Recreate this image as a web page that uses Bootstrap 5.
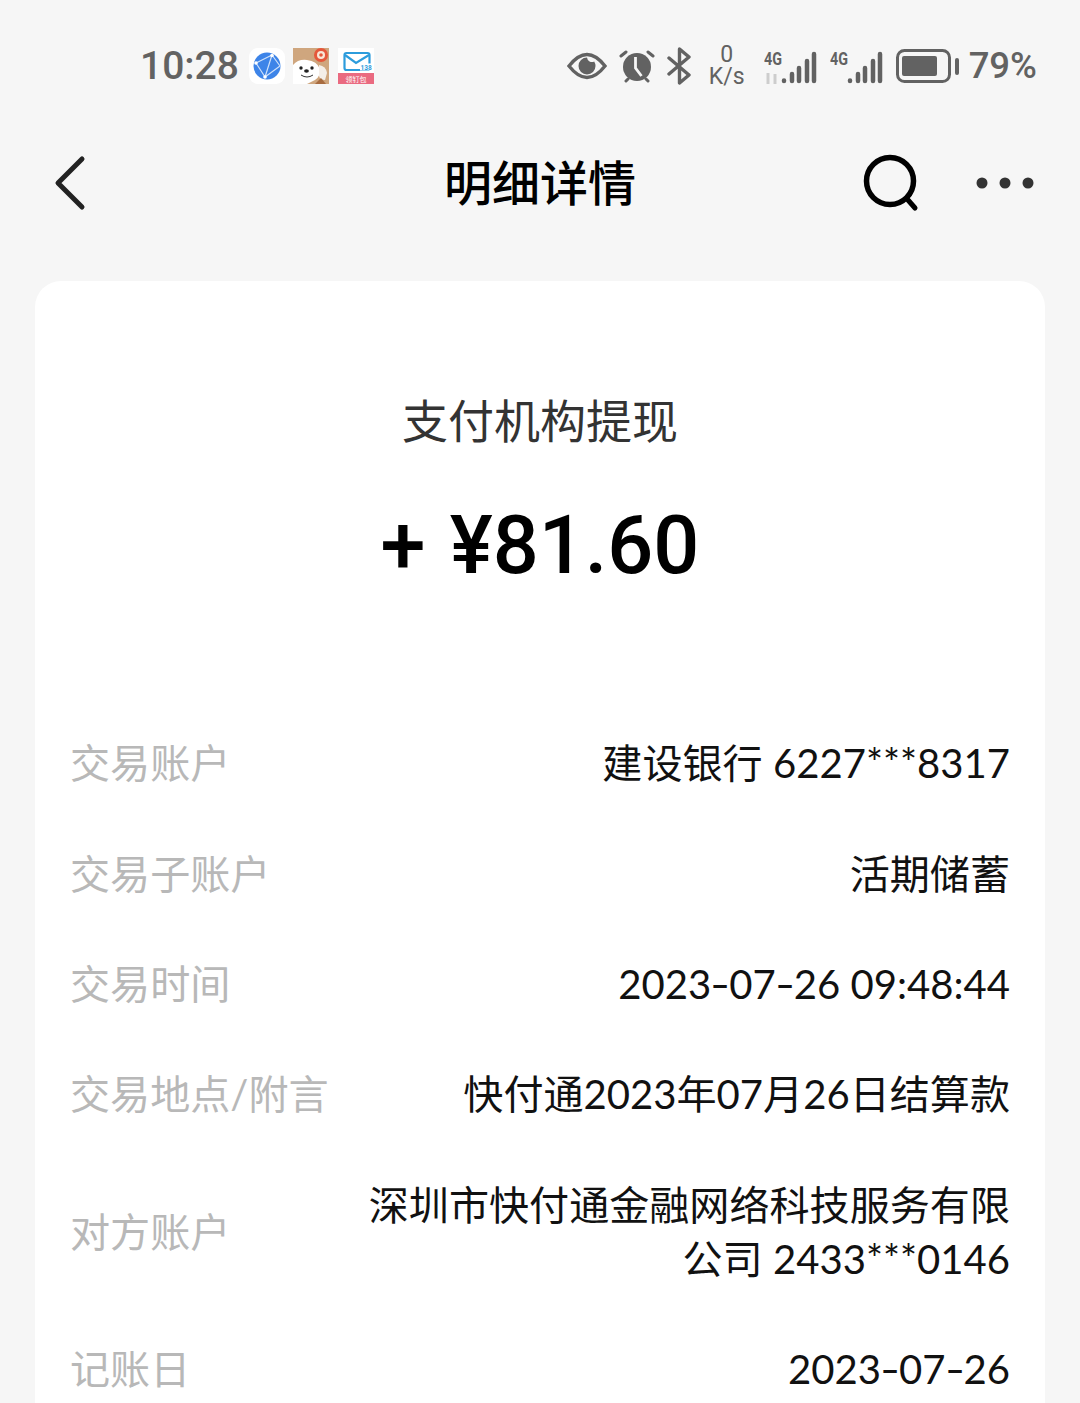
<!DOCTYPE html>
<html lang="zh-CN">
<head>
  <meta charset="UTF-8">
  <title>明细详情</title>
  <meta name="viewport" content="width=device-width, initial-scale=1">
  <link href="https://cdn.jsdelivr.net/npm/bootstrap@5.3.0/dist/css/bootstrap.min.css" rel="stylesheet">
  <style>
    html, body {
      height: 1403px;
      overflow: hidden;
      background: #f6f6f6;
    }
    body {
      font-family: Roboto, "Noto Sans CJK SC", sans-serif;
    }
    .status-bar {
      height: 132px;
      padding: 0 43px 0 140px;
      color: #626262;
    }
    .status-time {
      font-size: 39px;
      line-height: 1;
      font-weight: 500;
      margin-right: 10px;
    }
    .status-app {
      display: block;
      width: 36px;
      height: 36px;
      margin-right: 8.5px;
    }
    .status-icons {
      margin-left: auto;
    }
    .gap-b { margin-right: 10px; }
    .gap-s { margin-right: 12px; }
    .gap-m { margin-right: 17px; }
    .gap-l { margin-right: 18px; }
    .status-speed {
      font-size: 23px;
      line-height: 22px;
      width: 38px;
      text-align: center;
    }
    .status-pct {
      font-size: 36.5px;
      line-height: 1;
      font-weight: 500;
    }
    .top-bar {
      height: 102px;
      padding: 0 45px 0 52px;
    }
    .top-title {
      left: 0;
      right: 0;
      top: 2px;
      font-size: 48px;
      line-height: 102px;
      font-weight: 500;
      color: #000;
      text-align: center;
    }
    .top-search {
      margin-right: 55px;
    }
    .detail-card {
      margin: 47px 35px 0;
      height: 1200px;
      padding: 114px 35px 0;
      background: #fff;
      border-radius: 26px;
    }
    .detail-type {
      font-size: 46px;
      line-height: 54px;
      color: #333;
      text-align: center;
    }
    .detail-amount {
      margin-top: 51px;
      font-size: 81px;
      line-height: 92px;
      font-weight: 500;
      word-spacing: 4px;
      color: #000;
      text-align: center;
    }
    .detail-rows {
      margin-top: 116px;
      font-family: Lato, "Noto Sans CJK SC", sans-serif;
      font-size: 40.1px;
      line-height: 54px;
    }
    .detail-row {
      padding: 28.2px 0;
    }
    .detail-key {
      color: #b8b8b8;
      white-space: nowrap;
    }
    .detail-val {
      color: #111;
      text-align: right;
      max-width: 650px;
    }
    .wide-dash {
      display: inline-block;
      width: 18px;
      text-align: center;
      transform: scaleX(1.35);
    }
  </style>
</head>
<body>
  <!-- status bar -->
  <div class="status-bar d-flex align-items-center">
    <span class="status-time">10:28</span>
    <svg class="status-app" viewBox="0 0 36 36">
      <rect width="36" height="36" rx="9" fill="#fff"/>
      <circle cx="18" cy="18" r="13.5" fill="#3d84e8"/>
      <path d="M7 15 23 7M7 15l9 14M23 7l-7 22M23 7l8 11M16 29l15-11" stroke="#cfe1fa" stroke-width="1.2" fill="none"/>
      <circle cx="23" cy="7.500" r="1.800" fill="#fff"/>
      <circle cx="7" cy="15" r="1.800" fill="#fff"/>
      <circle cx="16" cy="29" r="1.800" fill="#fff"/>
    </svg>
    <svg class="status-app" viewBox="0 0 36 36">
      <rect width="36" height="36" fill="#cfa67e"/>
      <circle cx="28" cy="7" r="7" fill="#e5573a"/>
      <circle cx="28" cy="7" r="4" fill="#f8e6d6"/>
      <circle cx="28" cy="7" r="1.800" fill="#e5573a"/>
      <path d="M0 36V17Q5 11 14 12 24 13 27 21 28 28 22 32L14 36Z" fill="#fff"/>
      <path d="M26 17q7 1 8 8l-2 7q-5 0-6-4Z" fill="#f4eee8"/>
      <circle cx="8" cy="20" r="1.700" fill="#222"/>
      <circle cx="19" cy="20" r="1.700" fill="#222"/>
      <ellipse cx="13.500" cy="23" rx="2.400" ry="1.700" fill="#222"/>
      <path d="M8 27q6 4 12 0" fill="none" stroke="#333" stroke-width="1"/>
      <path d="M22 36l6-6 5 6Z" fill="#a86c40"/>
    </svg>
    <svg class="status-app" viewBox="0 0 36 36">
      <rect width="36" height="36" fill="#fff"/>
      <rect x="6.500" y="5" width="25" height="17" rx="2" fill="none" stroke="#2c9cdc" stroke-width="2.200"/>
      <path d="M7 7l11 8 13-8" fill="none" stroke="#2c9cdc" stroke-width="2.200"/>
      <rect x="22" y="15.500" width="11" height="7" fill="#fff"/>
      <text x="22.500" y="21.500" font-size="6.500" font-weight="700" fill="#2c9cdc" font-family="Roboto">138</text>
      <rect y="25" width="36" height="11" fill="#ea6a80"/>
      <text x="18" y="33.500" font-size="7" text-anchor="middle" fill="#fff" font-family="Noto Sans CJK SC">领钉包</text>
    </svg>

    <div class="status-icons d-flex align-items-center">
      <!-- eye -->
      <svg width="40" height="28" viewBox="0 0 40 28" class="gap-s">
        <path d="M2 14Q11 2.500 20 2.500T38 14Q29 25.500 20 25.500T2 14Z" fill="none" stroke="#626262" stroke-width="3.400"/>
        <path d="M20 5.500a8.500 8.500 0 1 0 8.500 8.500q0-2.500-1.300-4.500a5 5 0 0 1-7.200-4Z" fill="#626262"/>
      </svg>
      <!-- alarm -->
      <svg width="36" height="34" viewBox="0 0 36 34" class="gap-s">
        <circle cx="18" cy="18" r="14" fill="#626262"/>
        <path d="M2 7l5-4M34 7l-5-4M7 32l2-2M29 32l-2-2" stroke="#626262" stroke-width="3" stroke-linecap="round"/>
        <path d="M16.500 8v11l6 8" fill="none" stroke="#f6f6f6" stroke-width="2.800"/>
      </svg>
      <!-- bluetooth -->
      <svg width="24" height="38" viewBox="0 0 24 38" class="gap-m">
        <path d="M2 11l20 17-9.500 8V2l9.500 8L2 27" fill="none" stroke="#626262" stroke-width="3.400" stroke-linejoin="round" stroke-linecap="round"/>
      </svg>
      <div class="status-speed gap-l">0<br>K/s</div>
      <!-- sim 1 -->
      <svg width="54" height="40" viewBox="0 -4 54 40" class="gap-s">
        <text x="0" y="15" font-size="18" font-weight="700" fill="#626262" font-family="Roboto" textLength="18" lengthAdjust="spacingAndGlyphs">4G</text>
        <path d="M4 23v11M11 24v10" stroke="#cdcdcd" stroke-width="3"/>
        <path d="M20 30.500v.500M28 24v7M35 18v13M43 11v20M50 4v27" stroke="#626262" stroke-width="4.500" stroke-linecap="round"/>
      </svg>
      <!-- sim 2 -->
      <svg width="54" height="40" viewBox="0 -4 54 40" class="gap-s">
        <text x="0" y="15" font-size="18" font-weight="700" fill="#626262" font-family="Roboto" textLength="18" lengthAdjust="spacingAndGlyphs">4G</text>
        <path d="M20 30.500v.500M28 24v7M35 18v13M43 11v20M50 4v27" stroke="#626262" stroke-width="4.500" stroke-linecap="round"/>
      </svg>
      <!-- battery -->
      <svg width="63" height="34" viewBox="0 0 63 34" class="gap-b">
        <rect x="1.500" y="1.500" width="52" height="31" rx="7" fill="none" stroke="#626262" stroke-width="3"/>
        <rect x="6" y="7" width="35" height="20" rx="2" fill="#626262"/>
        <rect x="59" y="9" width="4" height="17" rx="2" fill="#626262"/>
      </svg>
      <span class="status-pct">79%</span>
    </div>
  </div>

  <!-- header -->
  <div class="top-bar d-flex align-items-center position-relative">
    <div class="top-title position-absolute">明细详情</div>
    <svg width="36" height="56" viewBox="0 0 36 56">
      <path d="M30 4 6 28l24 24" fill="none" stroke="#222" stroke-width="5" stroke-linecap="round" stroke-linejoin="round"/>
    </svg>
    <svg width="58" height="60" viewBox="0 0 58 60" class="ms-auto top-search">
      <circle cx="28" cy="28" r="23.500" fill="none" stroke="#000" stroke-width="5.500"/>
      <path d="M46 47l7 8" stroke="#000" stroke-width="5" stroke-linecap="round"/>
    </svg>
    <svg width="60" height="14" viewBox="0 0 60 14">
      <circle cx="7" cy="7" r="5.500" fill="#333"/>
      <circle cx="30" cy="7" r="5.500" fill="#333"/>
      <circle cx="53" cy="7" r="5.500" fill="#333"/>
    </svg>
  </div>

  <!-- card -->
  <div class="detail-card">
    <div class="detail-type">支付机构提现</div>
    <div class="detail-amount">+ ¥81.60</div>
    <div class="detail-rows">
      <div class="detail-row d-flex justify-content-between align-items-center">
        <div class="detail-key">交易账户</div>
        <div class="detail-val">建设银行 6227***8317</div>
      </div>
      <div class="detail-row d-flex justify-content-between align-items-center">
        <div class="detail-key">交易子账户</div>
        <div class="detail-val">活期储蓄</div>
      </div>
      <div class="detail-row d-flex justify-content-between align-items-center">
        <div class="detail-key">交易时间</div>
        <div class="detail-val">2023<span class="wide-dash">-</span>07<span class="wide-dash">-</span>26 09:48:44</div>
      </div>
      <div class="detail-row d-flex justify-content-between align-items-center">
        <div class="detail-key">交易地点/附言</div>
        <div class="detail-val">快付通2023年07月26日结算款</div>
      </div>
      <div class="detail-row d-flex justify-content-between align-items-center">
        <div class="detail-key">对方账户</div>
        <div class="detail-val">深圳市快付通金融网络科技服务有限公司 2433***0146</div>
      </div>
      <div class="detail-row d-flex justify-content-between align-items-center">
        <div class="detail-key">记账日</div>
        <div class="detail-val">2023<span class="wide-dash">-</span>07<span class="wide-dash">-</span>26</div>
      </div>
    </div>
  </div>

  <script src="https://cdn.jsdelivr.net/npm/bootstrap@5.3.0/dist/js/bootstrap.bundle.min.js"></script>
</body>
</html>
